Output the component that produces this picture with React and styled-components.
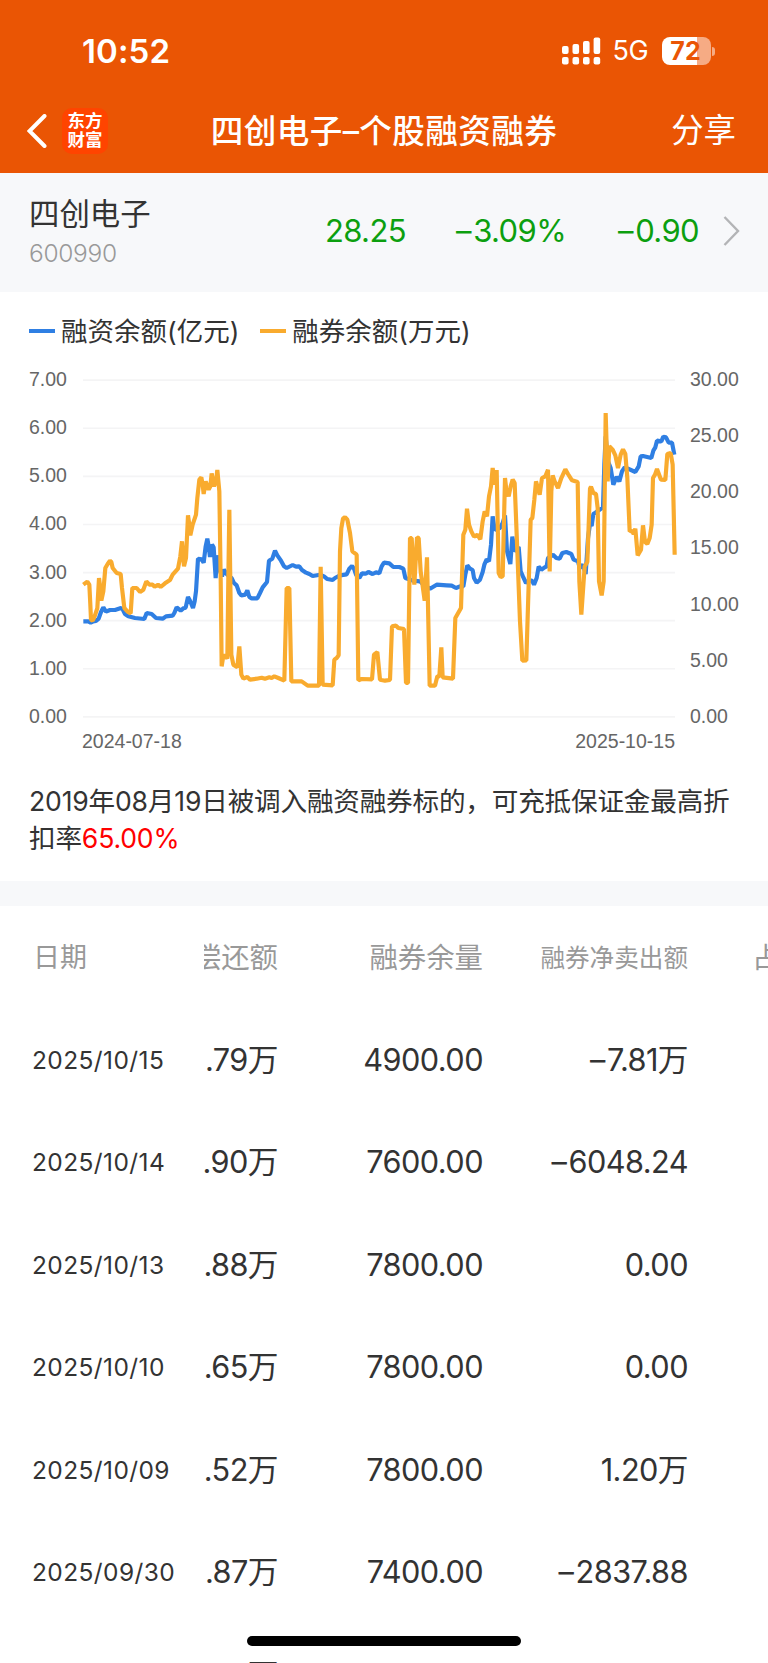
import styled, { createGlobalStyle } from "styled-components";

const legend = [
  { name: "融资余额(亿元)", color: "#2f7fe3" },
  { name: "融券余额(万元)", color: "#f9ab2e" },
];

const leftAxis = ["7.00", "6.00", "5.00", "4.00", "3.00", "2.00", "1.00", "0.00"];
const rightAxis = ["30.00", "25.00", "20.00", "15.00", "10.00", "5.00", "0.00"];

const marginBalance =
  "1,770 16,770 23,774 31,770 39,769 47,762 54,742 61,728 69,741 81,736 96,736 114,730 119,734 126,748 136,755 156,760 184,763 191,745 206,748 219,760 239,762 249,755 269,753 274,745 281,728 293,738 301,731 308,729 315,697 321,708 330,730 335,710 339,680 345,582 356,584 362,594 368,545 373,522 377,545 381,577 387,540 392,548 398,640 402,572 411,620 417,635 423,615 431,628 446,640 453,655 461,662 469,685 475,692 487,690 493,677 499,697 506,701 523,701 531,685 539,668 552,652 558,588 568,582 576,558 583,572 594,588 603,605 611,610 629,601 639,606 649,605 656,615 669,624 679,628 689,634 711,630 723,635 733,643 749,646 756,640 771,632 791,629 799,612 807,604 813,612 819,630 829,640 837,626 849,627 856,622 869,628 879,623 889,626 896,605 903,594 919,596 931,607 949,607 961,612 967,640 991,648 1011,650 1023,662 1041,672 1061,660 1091,662 1106,663 1119,670 1131,665 1141,665 1147,630 1153,602 1161,612 1169,616 1173,640 1181,654 1191,645 1199,622 1204,600 1211,584 1218,590 1224,540 1229,455 1235,495 1251,490 1259,475 1266,452 1272,560 1282,598 1288,516 1295,560 1307,547 1313,620 1320,636 1329,655 1337,648 1347,648 1353,660 1361,640 1367,606 1375,615 1385,608 1391,605 1395,580 1410,570 1420,580 1430,582 1438,565 1450,562 1465,568 1472,585 1485,590 1490,610 1500,600 1508,628 1515,520 1521,478 1526,484 1531,448 1537,444 1560,428 1564,300 1568,215 1575,290 1583,310 1591,360 1601,336 1609,350 1617,320 1625,308 1635,312 1657,322 1667,305 1673,275 1680,274 1705,280 1711,258 1717,248 1722,228 1735,230 1741,216 1749,218 1757,234 1767,234 1774,270";

const shortBalance =
  "1,660 13,651 19,660 22,720 24,765 29,768 35,755 43,730 48,640 52,670 55,708 61,680 67,610 74,598 81,588 85,592 89,610 101,625 113,628 117,670 124,730 133,740 143,746 148,670 161,670 171,682 181,675 190,650 199,660 209,660 215,666 225,660 233,667 246,656 261,646 269,630 285,612 292,575 297,530 300,570 303,605 309,580 315,452 319,480 322,512 329,480 339,450 343,400 349,345 355,338 359,360 362,388 368,350 377,375 382,365 386,326 393,365 399,350 403,316 409,380 413,640 416,905 420,880 425,870 433,882 436,640 439,435 445,870 451,900 463,908 469,845 475,930 481,942 493,937 501,945 521,942 536,939 546,942 559,938 566,940 574,935 586,940 604,948 611,670 619,670 625,950 656,950 674,963 708,963 713,606 719,960 749,962 754,885 761,880 767,872 771,560 775,490 780,462 786,457 793,465 801,505 808,560 821,570 826,947 836,943 867,944 873,870 883,862 891,945 906,948 921,946 927,785 939,783 946,790 963,793 969,955 975,955 981,520 986,520 994,660 1002,518 1007,520 1013,620 1025,708 1032,578 1040,963 1056,963 1063,935 1069,935 1075,848 1079,938 1110,942 1117,760 1134,730 1141,510 1147,495 1152,432 1158,480 1165,500 1173,516 1183,510 1192,524 1199,470 1205,440 1212,455 1218,395 1224,365 1229,310 1235,360 1241,316 1247,625 1253,637 1259,635 1266,340 1270,375 1277,395 1283,365 1289,345 1295,355 1303,560 1311,770 1318,888 1330,887 1343,465 1348,460 1354,405 1359,350 1370,390 1377,340 1387,335 1395,315 1400,620 1405,380 1409,332 1415,350 1425,370 1435,340 1447,314 1455,328 1467,347 1484,352 1489,650 1495,750 1505,605 1513,592 1521,372 1524,366 1531,385 1539,388 1544,430 1548,650 1556,692 1562,650 1568,145 1574,350 1579,245 1589,255 1597,272 1605,310 1613,270 1620,254 1627,268 1633,340 1640,500 1647,498 1652,508 1657,492 1664,572 1674,555 1680,482 1686,532 1693,538 1700,520 1706,480 1710,340 1716,330 1722,313 1734,345 1747,346 1753,268 1763,265 1769,300 1775,570";

const rows = [
  ["2025/10/15", ".79万", "4900.00", "–7.81万"],
  ["2025/10/14", ".90万", "7600.00", "–6048.24"],
  ["2025/10/13", ".88万", "7800.00", "0.00"],
  ["2025/10/10", ".65万", "7800.00", "0.00"],
  ["2025/10/09", ".52万", "7800.00", "1.20万"],
  ["2025/09/30", ".87万", "7400.00", "–2837.88"],
];

const SignalIcon = () => (
  <svg width="39" height="28" viewBox="0 0 39 28" fill="#fff">
    <rect x="0" y="9" width="6.6" height="8" rx="2" />
    <rect x="10.5" y="7" width="6.6" height="10" rx="2" />
    <rect x="21" y="4" width="6.6" height="13" rx="2" />
    <rect x="31.6" y="0.5" width="6.6" height="16.5" rx="2" />
    <rect x="0" y="20" width="6.6" height="7.4" rx="2" />
    <rect x="10.5" y="20" width="6.6" height="7.4" rx="2" />
    <rect x="21" y="20" width="6.6" height="7.4" rx="2" />
    <rect x="31.6" y="20" width="6.6" height="7.4" rx="2" />
  </svg>
);

// the minus sign gets a bit more room than the digits
const Amount = ({ value }) =>
  value.startsWith("–") ? (
    <span>
      <StyledMinus>–</StyledMinus>
      {value.slice(1)}
    </span>
  ) : (
    value
  );

const Chart = () => (
  <StyledPlot viewBox="0 40 1776 1022">
    {leftAxis.map((label, i) => (
      <line
        key={label}
        x1="0"
        x2="1776"
        y1={46.5 + i * 144.3}
        y2={46.5 + i * 144.3}
        stroke="#f4f4f5"
        strokeWidth="5"
      />
    ))}
    <polyline points={marginBalance} stroke={legend[0].color} />
    <polyline points={shortBalance} stroke={legend[1].color} />
  </StyledPlot>
);

export default function App() {
  return (
    <StyledScreen>
      <GlobalStyle />
      <StyledHeader>
        <StyledStatusBar>
          <StyledTime>10:52</StyledTime>
          <StyledStatusIcons>
            <SignalIcon />
            <StyledNetwork>5G</StyledNetwork>
            <StyledBattery>
              <StyledBatteryBody>72</StyledBatteryBody>
              <StyledBatteryTip />
            </StyledBattery>
          </StyledStatusIcons>
        </StyledStatusBar>
        <StyledNav>
          <StyledNavLeft>
            <svg width="20" height="34" viewBox="0 0 20 34" fill="none">
              <path d="M17.5 2L2.5 17l15 15" stroke="#fff" strokeWidth="4" strokeLinecap="round" />
            </svg>
            <StyledLogo>
              <span>东方</span>
              <span>财富</span>
            </StyledLogo>
          </StyledNavLeft>
          <StyledTitle>四创电子–个股融资融券</StyledTitle>
          <StyledShare>分享</StyledShare>
        </StyledNav>
      </StyledHeader>

      <StyledQuote>
        <StyledStock>
          <StyledStockName>四创电子</StyledStockName>
          <StyledStockCode>600990</StyledStockCode>
        </StyledStock>
        <StyledPrice $width={124}>28.25</StyledPrice>
        <StyledPrice $width={160}>
          <Amount value="–3.09%" />
        </StyledPrice>
        <StyledPrice $width={133}>
          <Amount value="–0.90" />
        </StyledPrice>
        <StyledArrow width="17" height="32" viewBox="0 0 17 32" fill="none">
          <path d="M1.5 2L15 16L1.5 30" stroke="#b3b4b6" strokeWidth="2.4" />
        </StyledArrow>
      </StyledQuote>

      <StyledLegend>
        {legend.map((item) => (
          <StyledLegendItem key={item.name}>
            <StyledLegendLine $color={item.color} />
            <StyledLegendName>{item.name}</StyledLegendName>
          </StyledLegendItem>
        ))}
      </StyledLegend>

      <StyledChart>
        <StyledAxis>
          {leftAxis.map((label) => (
            <span key={label}>{label}</span>
          ))}
        </StyledAxis>
        <StyledChartBody>
          <Chart />
          <StyledDates>
            <span>2024-07-18</span>
            <span>2025-10-15</span>
          </StyledDates>
        </StyledChartBody>
        <StyledAxis>
          {rightAxis.map((label) => (
            <span key={label}>{label}</span>
          ))}
        </StyledAxis>
      </StyledChart>

      <StyledNotice>
        2019年08月19日被调入融资融券标的，可充抵保证金最高折
        <br />
        扣率<span>65.00%</span>
      </StyledNotice>
      <StyledDivider />

      <StyledTable>
        <StyledHeadRow>
          <StyledDateHead>日期</StyledDateHead>
          <StyledCell $width={74}>偿还额</StyledCell>
          <StyledCell $width={205}>融券余量</StyledCell>
          <StyledCell $width={205} $size={24.6}>
            融券净卖出额
          </StyledCell>
          <StyledNextCell>占</StyledNextCell>
        </StyledHeadRow>
        {rows.map(([date, repaid, volume, netSell]) => (
          <StyledRow key={date}>
            <StyledDateCell>{date}</StyledDateCell>
            <StyledCell $width={74}>{repaid}</StyledCell>
            <StyledCell $width={205}>{volume}</StyledCell>
            <StyledCell $width={205}>
              <Amount value={netSell} />
            </StyledCell>
          </StyledRow>
        ))}
        <StyledRow>
          <StyledDateCell />
          <StyledCell $width={74}>万</StyledCell>
        </StyledRow>
      </StyledTable>
      <StyledHomeIndicator />
    </StyledScreen>
  );
}

const GlobalStyle = createGlobalStyle`
  * {
    box-sizing: border-box;
  }
  body {
    margin: 0;
    background: #fff;
  }
`;
const StyledScreen = styled.div`
  position: relative;
  display: flex;
  flex-direction: column;
  width: 768px;
  height: 1663px;
  overflow: hidden;
  background: #fff;
  color: #333;
  font-family: Inter, "Noto Sans CJK SC", sans-serif;
  font-weight: 380;
  line-height: 40px;
  white-space: nowrap;
`;
const StyledHeader = styled.header`
  display: flex;
  flex-direction: column;
  flex: none;
  height: 173px;
  background: #ea5504;
  color: #fff;
`;
const StyledStatusBar = styled.div`
  display: flex;
  justify-content: space-between;
  align-items: center;
  height: 102px;
  padding: 0 53px 0 82px;
`;
const StyledTime = styled.div`
  font-size: 33px;
  font-weight: 600;
  letter-spacing: 0.1px;
`;
const StyledStatusIcons = styled.div`
  display: flex;
  align-items: center;
`;
const StyledNetwork = styled.div`
  width: 61px;
  padding-left: 12px;
  font-size: 27px;
  font-weight: 400;
  letter-spacing: -0.5px;
`;
const StyledBattery = styled.div`
  display: flex;
  align-items: center;
  gap: 1.5px;
`;
const StyledBatteryBody = styled.div`
  display: flex;
  justify-content: center;
  align-items: center;
  width: 49px;
  height: 28px;
  padding-right: 1px;
  border-radius: 8px;
  background: linear-gradient(90deg, #fff 72%, #f6ab84 72%);
  color: #ea5504;
  font-size: 25px;
  font-weight: 650;
`;
const StyledBatteryTip = styled.div`
  width: 3px;
  height: 9px;
  border-radius: 0 4px 4px 0;
  background: #f6ab84;
`;
const StyledNav = styled.nav`
  display: grid;
  grid-template-columns: 180px 1fr 180px;
  align-items: center;
  height: 57px;
`;
const StyledNavLeft = styled.div`
  display: flex;
  align-items: center;
  gap: 15px;
  padding-left: 27px;
`;
const StyledLogo = styled.div`
  display: flex;
  flex-direction: column;
  align-items: center;
  justify-content: center;
  width: 46px;
  height: 46px;
  padding-bottom: 2px;
  border-radius: 10px;
  background: #ff4400;
  font-size: 17.5px;
  font-weight: 700;
  line-height: 19px;
`;
const StyledTitle = styled.h1`
  margin: 0;
  font-size: 32.6px;
  font-weight: 500;
  letter-spacing: 0.4px;
  text-align: center;
`;
const StyledShare = styled.div`
  padding: 1px 32px 0 0;
  font-size: 32.4px;
  text-align: right;
`;
const StyledQuote = styled.section`
  display: flex;
  align-items: center;
  flex: none;
  height: 119px;
  padding-left: 29px;
  background: #f7f8fa;
`;
const StyledStock = styled.div`
  display: flex;
  flex-direction: column;
  width: 253px;
`;
const StyledStockName = styled.div`
  font-size: 30.4px;
  line-height: 41px;
`;
const StyledStockCode = styled.div`
  color: #999;
  font-size: 24.5px;
  font-weight: 300;
  line-height: 37px;
  letter-spacing: -0.3px;
`;
const StyledPrice = styled.div`
  width: ${({ $width }) => $width}px;
  padding-bottom: 3px;
  color: #0c9f0f;
  font-size: 31px;
  letter-spacing: -0.6px;
  text-align: right;
`;
const StyledMinus = styled.span`
  letter-spacing: 1.6px;
`;
const StyledArrow = styled.svg`
  margin: 0 0 4px 24px;
`;
const StyledLegend = styled.div`
  display: flex;
  flex: none;
  gap: 21px;
  height: 78px;
  padding-left: 29px;
`;
const StyledLegendItem = styled.div`
  display: flex;
  align-items: center;
  gap: 6px;
`;
const StyledLegendLine = styled.i`
  width: 26px;
  height: 4px;
  background: ${({ $color }) => $color};
`;
const StyledLegendName = styled.span`
  padding-bottom: 1px;
  font-size: 26.5px;
`;
const StyledChart = styled.section`
  display: flex;
  flex: none;
  height: 402px;
  padding: 0 29px;
  color: #666;
  font-family: "Liberation Sans", sans-serif;
  font-size: 19.5px;
  font-weight: 400;
`;
const StyledAxis = styled.div`
  display: flex;
  flex-direction: column;
  justify-content: space-between;
  height: 355px;
  line-height: 18px;
  &:first-child {
    width: 54px;
  }
  &:last-child {
    margin-left: 15px;
  }
`;
const StyledChartBody = styled.div`
  display: flex;
  flex-direction: column;
  padding-top: 8.3px;
`;
const StyledPlot = styled.svg`
  display: block;
  width: 592px;
  height: 340.7px;
  overflow: visible;
  fill: none;
  polyline {
    stroke-width: 12.5;
    stroke-linejoin: bevel;
  }
`;
const StyledDates = styled.div`
  display: flex;
  justify-content: space-between;
  margin-left: -1px;
  padding-top: 11px;
  line-height: 22px;
`;
const StyledNotice = styled.p`
  flex: none;
  height: 109px;
  margin: 0;
  padding: 11px 0 0 29px;
  font-size: 26.6px;
  line-height: 37px;
  letter-spacing: -0.18px;
  & > span {
    color: #f00;
  }
`;
const StyledDivider = styled.div`
  flex: none;
  height: 25px;
  background: #f7f8fa;
`;
const StyledTable = styled.section`
  display: flex;
  flex-direction: column;
`;
const StyledRow = styled.div`
  display: flex;
  align-items: center;
  flex: none;
  height: 102.5px;
  padding-left: 33px;
  font-size: 30.7px;
  letter-spacing: -0.55px;
`;
const StyledHeadRow = styled(StyledRow)`
  padding-top: 2px;
  color: #999;
  font-size: 28.4px;
  letter-spacing: 0;
`;
const StyledDateCell = styled.div`
  flex: none;
  width: 172px;
  margin-left: -1px;
  font-size: 24.5px;
  letter-spacing: 0.4px;
`;
const StyledDateHead = styled(StyledDateCell)`
  padding-left: 1px;
  font-size: 27px;
  letter-spacing: 0;
`;
const StyledCell = styled.div`
  display: flex;
  flex: none;
  justify-content: flex-end;
  width: ${({ $width }) => $width}px;
  overflow: hidden;
  ${({ $size }) => $size && `font-size: ${$size}px;`}
`;
const StyledNextCell = styled.div`
  margin-left: 64px;
`;
const StyledHomeIndicator = styled.div`
  position: absolute;
  left: 247px;
  bottom: 17px;
  width: 274px;
  height: 10px;
  border-radius: 5px;
  background: #000;
`;
